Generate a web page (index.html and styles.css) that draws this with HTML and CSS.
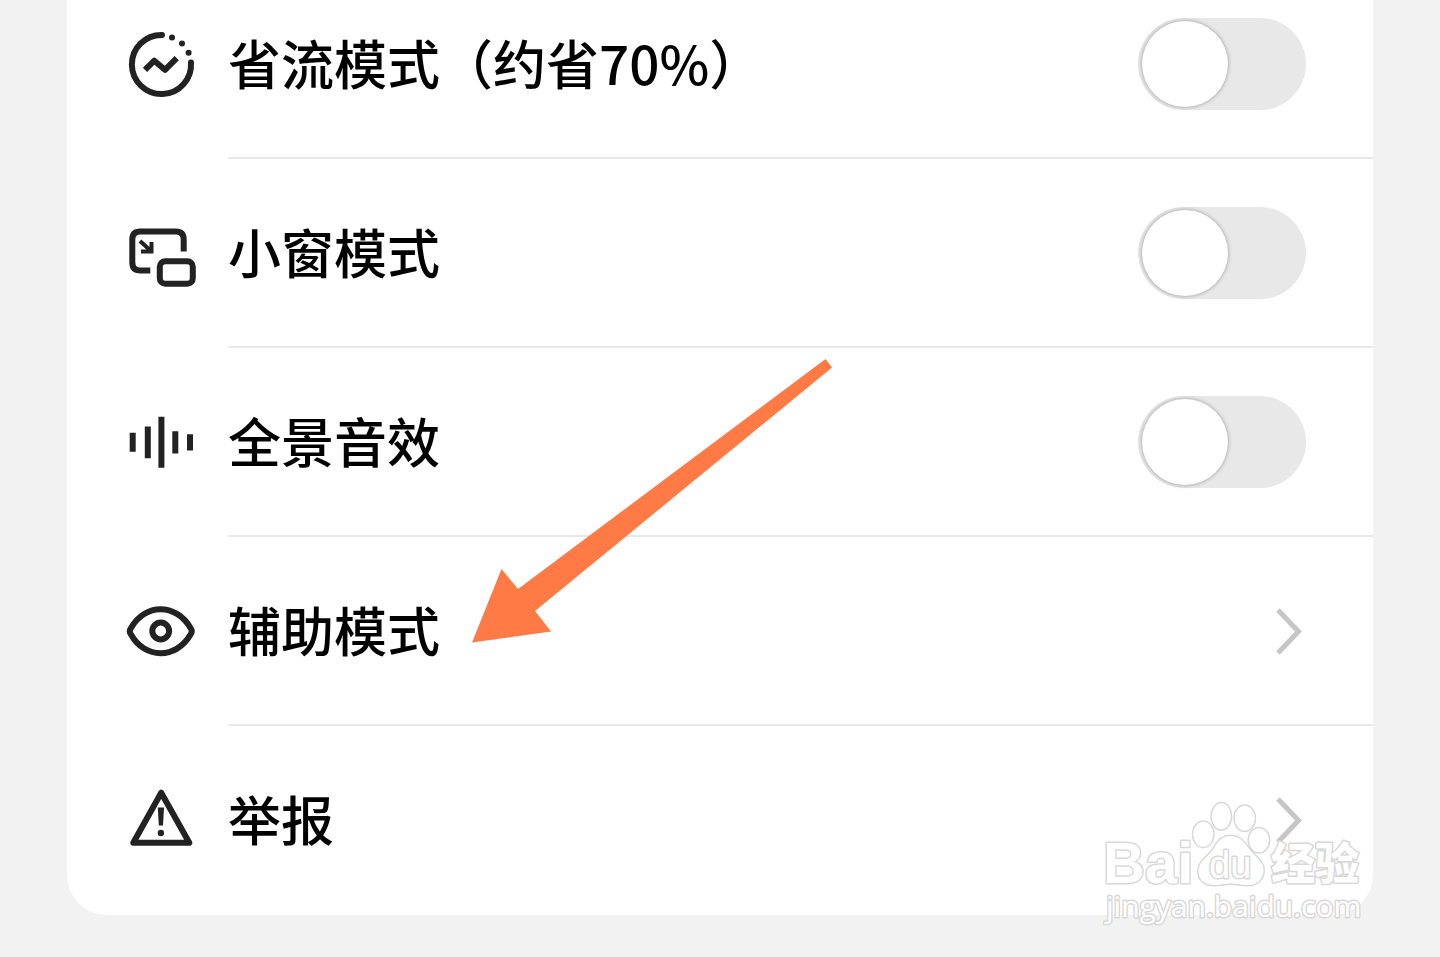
FILE: index.html
```
<!DOCTYPE html>
<html lang="zh-CN">
<head>
<meta charset="utf-8">
<meta name="viewport" content="width=device-width, initial-scale=1">
<title>播放设置</title>
<link rel="stylesheet" href="styles.css">
</head>
<body>
<main class="page">
  <ul class="card">
    <li class="row">
      <svg class="icon" viewBox="0 0 72 72" aria-hidden="true">
        <path class="round" d="M37 6.9A29.6 29.6 0 1 0 66 34.5"/>
        <path d="M20 41.8L29.3 32.7L40 41.8L51.7 30.2"/>
        <g class="solid"><circle cx="47" cy="9.4" r="3"/><circle cx="57" cy="15.6" r="3"/><circle cx="63.6" cy="24.8" r="3"/></g>
      </svg>
      <label class="body"><span class="label">省流模式（约省70%）</span><input class="switch" type="checkbox" role="switch"></label>
    </li>
    <li class="row">
      <svg class="icon" viewBox="0 0 72 72" aria-hidden="true">
        <path d="M25.3 53.6H15.3Q7.3 53.6 7.3 45.6V22.5Q7.3 14.5 15.3 14.5H50.7Q58.7 14.5 58.7 22.5V34.5"/>
        <rect x="34.8" y="44.2" width="33" height="22.5" rx="5.5"/>
        <path class="arrowhead" d="M15 24L26 34M26.500 25V34.500H16"/>
      </svg>
      <label class="body"><span class="label">小窗模式</span><input class="switch" type="checkbox" role="switch"></label>
    </li>
    <li class="row">
      <svg class="icon" viewBox="0 0 72 72" aria-hidden="true">
        <path d="M7.7 26.8V45.8M22.8 20.5V52.2M36.4 10.8V61.8M50.3 25.2V47.5M65 28.2V44.5"/>
      </svg>
      <label class="body"><span class="label">全景音效</span><input class="switch" type="checkbox" role="switch"></label>
    </li>
    <li class="row">
      <svg class="icon" viewBox="0 0 72 72" aria-hidden="true">
        <path d="M6 33C20 8 51 8 65.5 33Q68 36.3 65.5 39.5C51 64.5 20 64.5 6 39.5Q3.5 36.3 6 33Z"/>
        <circle cx="35.7" cy="36" r="8.4"/>
      </svg>
      <a class="body" href="#assist"><span class="label">辅助模式</span>
        <svg class="chevron" viewBox="0 0 32 48" aria-hidden="true"><path d="M4 3L24.5 24.5L4 46"/></svg></a>
    </li>
    <li class="row">
      <svg class="icon" viewBox="0 0 72 72" aria-hidden="true">
        <path d="M36.2 8.7L64.3 58.8H8.3Z"/>
        <g class="solid"><path d="M32.8 23.5H39L38 41.5H33.8Z"/><circle cx="35.9" cy="49" r="3.2"/></g>
      </svg>
      <a class="body" href="#report"><span class="label">举报</span>
        <svg class="chevron" viewBox="0 0 32 48" aria-hidden="true"><path d="M4 3L24.5 24.5L4 46"/></svg></a>
    </li>
  </ul>

  <svg class="arrow" viewBox="0 0 360 284" aria-hidden="true">
    <path d="M0 283.5L29.5 210L46 230L353.5 0L360 8.5L63 252L79 272.5Z"/>
  </svg>

  <svg class="watermark" viewBox="0 0 272 135" role="img" aria-label="Baidu 经验">
    <g class="mark">
      <ellipse cx="103.3" cy="39.3" rx="10" ry="12.5"/>
      <ellipse cx="121.3" cy="21.3" rx="9.5" ry="13"/>
      <ellipse cx="144.7" cy="23.2" rx="10" ry="12.4"/>
      <ellipse cx="159" cy="45.3" rx="10" ry="12"/>
      <path d="M130.7 41C122 41 118 46 113.5 54C109 61 98.5 66 98.5 76C98.5 85 105 90 114 90C121 90 124 88.5 130 88.5C137 88.5 141 90 148 90C157 90 163.5 84 163.5 75C163.5 66 154 61 149 54C144 46 139 41 130.7 41Z"/>
    </g>
    <text class="mark brand" x="3" y="88">Bai</text>
    <text class="mark du" x="109" y="83">du</text>
    <text class="mark cjk" x="171" y="85">经验</text>
    <text class="mark url" x="6" y="122">jingyan.baidu.com</text>
  </svg>
</main>
</body>
</html>
```
FILE: styles.css
```
* { box-sizing: border-box; }

body {
  margin: 0;
  background: #f2f2f2;
  color: #000;
  font-family: "Noto Sans CJK SC", sans-serif;
}

.page {
  position: relative;
  display: flow-root;
  overflow: hidden;
  padding: 0 67px 42px;
}

/* The list is scrolled slightly past its first row's top edge. */
.card {
  margin: -30px 0 0;
  padding: 0;
  list-style: none;
  background: #fff;
  border-radius: 0 0 40px 40px;
}

.row {
  display: flex;
  align-items: stretch;
  gap: 31px;
  padding-left: 58px;
}

.icon {
  flex: none;
  align-self: center;
  width: 72px;
  height: 72px;
  margin-bottom: 2px;
  fill: none;
  stroke: #222;
  stroke-width: 6;
  stroke-linejoin: round;
}
.icon .round { stroke-linecap: round; }
.icon .arrowhead { stroke-width: 4; stroke-linejoin: miter; }
.icon .solid { fill: #222; stroke: none; }

.body {
  flex: 1;
  display: flex;
  align-items: center;
  justify-content: space-between;
  height: 189px;
  padding-right: 67px;
  border-bottom: 2px solid #e8e8e8;
  color: inherit;
  text-decoration: none;
}
.row:last-child .body { border-bottom-color: transparent; }

.label {
  padding-bottom: 4px;
  font-size: 53px;
  font-weight: 500;
  line-height: 72px;
}

.switch {
  appearance: none;
  flex: none;
  width: 168px;
  height: 92px;
  margin: 0;
  padding: 3px 4px;
  border-radius: 46px;
  background: #e8e8e8;
}
.switch::before {
  content: "";
  display: block;
  width: 86px;
  height: 86px;
  border-radius: 50%;
  background: #fff;
  box-shadow: 0 0 4px rgba(0, 0, 0, 0.35);
}
.switch:checked { background: #fb7299; }
.switch:checked::before { margin-left: auto; }

.chevron {
  flex: none;
  width: 32px;
  height: 48px;
  fill: none;
  stroke: #c6c6c6;
  stroke-width: 5;
}

.arrow {
  position: absolute;
  top: 359px;
  left: 472px;
  width: 360px;
  height: 284px;
  fill: #ff7a45;
  pointer-events: none;
}

.watermark {
  position: absolute;
  right: 68px;
  bottom: 27px;
  width: 272px;
  height: 135px;
  pointer-events: none;
}
.mark {
  fill: #fff;
  stroke: #d8d8d8;
  stroke-width: 3;
  stroke-linejoin: round;
  paint-order: stroke;
}
.brand { font: 700 58px "Liberation Sans", sans-serif; }
.du { font: 400 38px "Liberation Sans", sans-serif; }
.cjk { font: 900 44px "Noto Sans CJK SC", sans-serif; }
.url { font: 400 30px "Open Sans", sans-serif; }
```
